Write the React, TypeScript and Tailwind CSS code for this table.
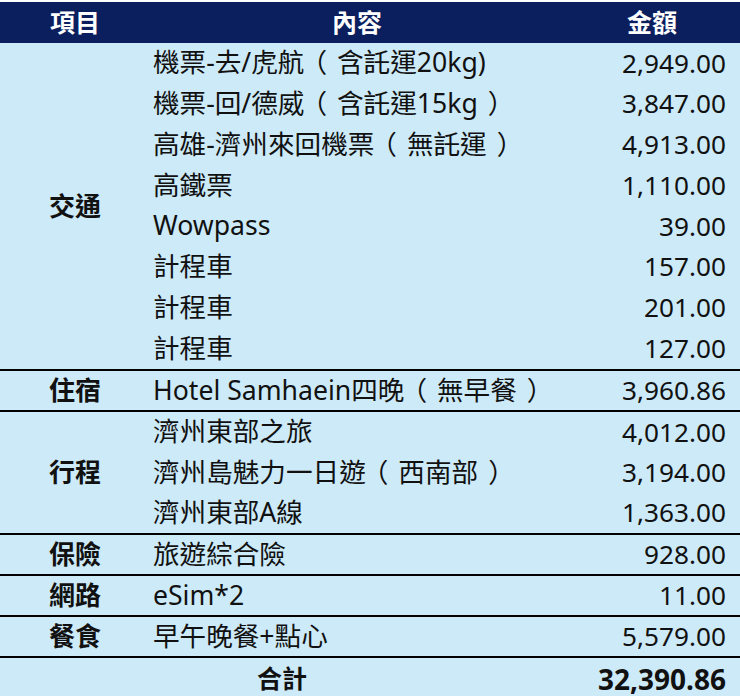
import React from 'react';

type Group = {
  label: string;
  rows: [string, string][];
};

const groups: Group[] = [
  {
    label: '交通',
    rows: [
      ['機票-去/虎航（含託運20kg)', '2,949.00'],
      ['機票-回/德威（含託運15kg）', '3,847.00'],
      ['高雄-濟州來回機票（無託運）', '4,913.00'],
      ['高鐵票', '1,110.00'],
      ['Wowpass', '39.00'],
      ['計程車', '157.00'],
      ['計程車', '201.00'],
      ['計程車', '127.00'],
    ],
  },
  { label: '住宿', rows: [['Hotel Samhaein四晚（無早餐）', '3,960.86']] },
  {
    label: '行程',
    rows: [
      ['濟州東部之旅', '4,012.00'],
      ['濟州島魅力一日遊（西南部）', '3,194.00'],
      ['濟州東部A線', '1,363.00'],
    ],
  },
  { label: '保險', rows: [['旅遊綜合險', '928.00']] },
  { label: '網路', rows: [['eSim*2', '11.00']] },
  { label: '餐食', rows: [['早午晚餐+點心', '5,579.00']] },
];

const font = { fontFamily: '"Noto Sans", "Noto Sans CJK TC", sans-serif' };

// full-width parens sit centred in their box in the reference font
const withParens = (text: string) =>
  text.split(/([（）])/).map((part, i) => {
    if (part === '（')
      return (
        <span key={i} className="inline-block mx-[3px] -translate-x-[7px]">
          （
        </span>
      );
    if (part === '）')
      return (
        <span key={i} className="inline-block mx-[3px] translate-x-[7px]">
          ）
        </span>
      );
    return <React.Fragment key={i}>{part}</React.Fragment>;
  });

const GroupBlock: React.FC<{ group: Group }> = ({ group }) => {
  const heights: Record<number, string> = { 1: 'h-[41px]', 3: 'h-[123px]', 8: 'h-[328px]' };
  return (
    <div className={`flex border-b-2 border-black ${heights[group.rows.length]}`}>
      <div className="w-[150px] flex items-center justify-center text-[26px] font-bold text-[#111]">
        {group.label}
      </div>
      <div className="flex-1 flex flex-col">
        {group.rows.map(([name, amount], i) => (
          <div key={i} className="flex-1 flex items-center text-[26.6px] text-[#111]">
            <span className="pl-[3px] flex-1 whitespace-nowrap">{withParens(name)}</span>
            <span className="w-[176px] text-right pr-[14px] text-[26.2px]">{amount}</span>
          </div>
        ))}
      </div>
    </div>
  );
};

export default function App() {
  return (
    <div
      lang="zh-TW"
      className="w-[740px] h-[696px] overflow-hidden bg-white pt-[2px]"
      style={font}
    >
      <div className="h-[41px] bg-[#0b1f5e] flex items-center text-white font-bold text-[25px]">
        <div className="w-[150px] text-center">項目</div>
        <div className="flex-1 text-center">內容</div>
        <div className="w-[176px] text-center">金額</div>
      </div>
      <div className="bg-[#cdeaf8]">
        {groups.map((g) => (
          <GroupBlock key={g.label} group={g} />
        ))}
        <div className="h-[41px] flex items-center text-[#111] font-bold">
          <div className="flex-1 text-center text-[25px]">合計</div>
          <div className="w-[176px] text-right pr-[14px] text-[28px]">32,390.86</div>
        </div>
      </div>
    </div>
  );
}
